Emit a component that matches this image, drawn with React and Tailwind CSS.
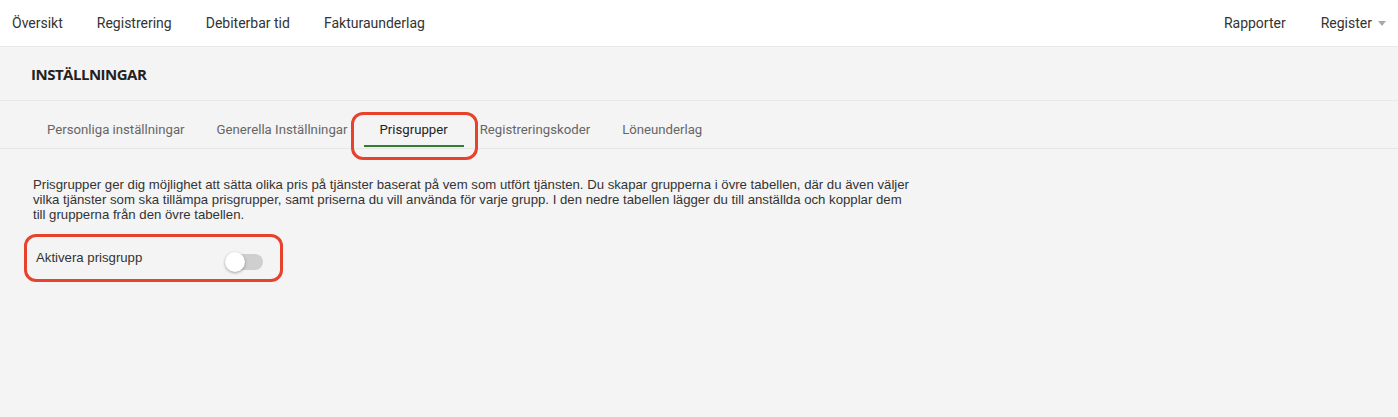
import React from "react";

const tabs = [
  "Personliga inställningar",
  "Generella Inställningar",
  "Prisgrupper",
  "Registreringskoder",
  "Löneunderlag",
];

export default function App() {
  return (
    <div className="w-[1398px] h-[417px] bg-[#f4f4f4] overflow-hidden" style={{ fontFamily: "Roboto, 'Liberation Sans', sans-serif" }}>
      <nav className="h-[46px] bg-white flex items-center justify-between text-[14px] text-[#333]">
        <div className="flex items-center pl-[12px] gap-[34px]">
          <span>Översikt</span>
          <span>Registrering</span>
          <span>Debiterbar tid</span>
          <span>Fakturaunderlag</span>
        </div>
        <div className="flex items-center gap-[35px] pr-[12px]">
          <span>Rapporter</span>
          <span className="flex items-center gap-[6px]">
            Register
            <svg width="8" height="5" viewBox="0 0 8 5"><path d="M0 0h8L4 5z" fill="#aaa" /></svg>
          </span>
        </div>
      </nav>
      <div className="border-t border-[#e8e8e8] h-[55px] flex items-center pl-[31px] pt-[2px] border-b">
        <h1 className="text-[15px] font-bold text-[#222] tracking-[-0.5px]" style={{ fontFamily: "'Open Sans', sans-serif" }}>INSTÄLLNINGAR</h1>
      </div>
      <div className="h-[48px] border-b border-[#e6e6e6] flex items-stretch pl-[31px] text-[13.2px] leading-[15px] text-[#666]">
        {tabs.map((t) => {
          const active = t === "Prisgrupper";
          return (
            <div key={t} className="relative flex items-end pb-[11px] px-[16px]">
              <span className={active ? "text-[#222]" : ""}>{t}</span>
              {active && (
                <>
                  <div className="absolute left-[1px] right-0 bottom-[1px] h-[2px] bg-[#2e7d32]" />
                  <div className="absolute -left-[12px] -right-[14px] top-[11px] -bottom-[12px] border-[3px] border-[#e8412c] rounded-[12px]" />
                </>
              )}
            </div>
          );
        })}
      </div>
      <div className="pl-[33px] pt-[29px] text-[13.2px] leading-[14.8px] text-[#333]" style={{ fontFamily: "'Liberation Sans', sans-serif" }}>
        <p className="w-[882px]">
          Prisgrupper ger dig möjlighet att sätta olika pris på tjänster baserat på vem som utfört tjänsten. Du skapar grupperna i övre tabellen, där du även väljer vilka tjänster som ska tillämpa prisgrupper, samt priserna du vill använda för varje grupp. I den nedre tabellen lägger du till anställda och kopplar dem till grupperna från den övre tabellen.
        </p>
        <div className="relative mt-[28px] ml-[3px] w-[227px] flex items-start justify-between">
          <span className="leading-[15px]">Aktivera prisgrupp</span>
          <div className="relative mt-[2px] w-[38px] h-[20px]">
            <div className="absolute left-[2px] right-0 top-[2px] bottom-[2px] rounded-full bg-[#cfcfcf]" />
            <div className="absolute left-0 top-0 w-[20px] h-[20px] rounded-full bg-white shadow-[0_1px_3px_rgba(0,0,0,0.35)]" />
          </div>
          <div className="absolute -left-[12px] -right-[20px] -top-[16px] -bottom-[10px] border-[3px] border-[#e8412c] rounded-[12px]" />
        </div>
      </div>
    </div>
  );
}
